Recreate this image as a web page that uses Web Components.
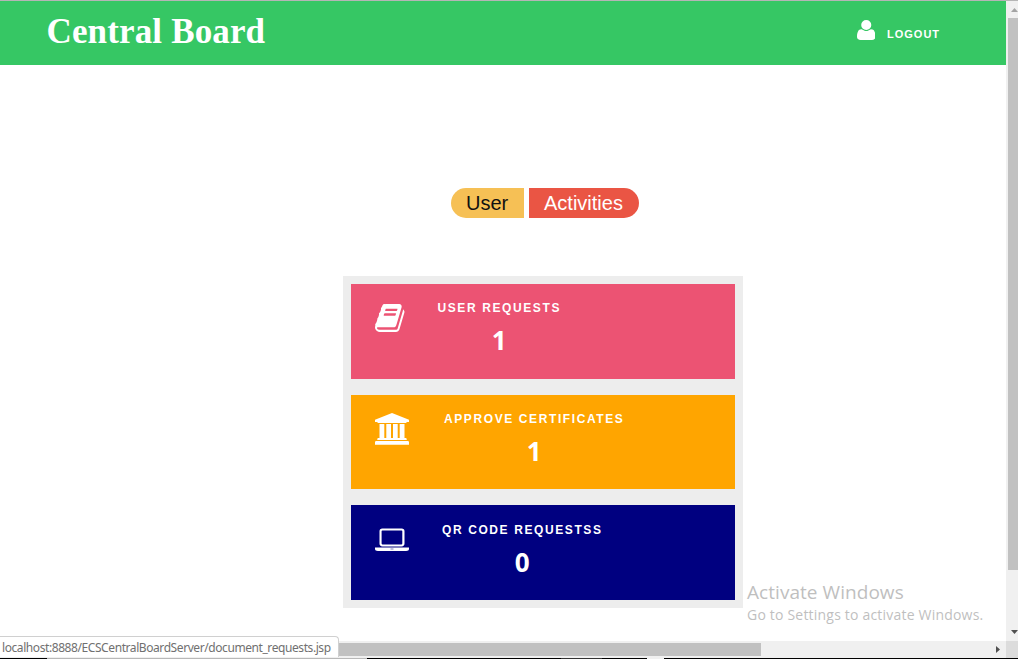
<!DOCTYPE html>
<html lang="en"><head><meta charset="utf-8"><title>Central Board</title>
<style>body{margin:0;overflow:hidden;background:#fff;font-family:"Liberation Sans",Arial,sans-serif}</style></head>
<body>
<browser-view>
  <board-header slot="page"></board-header>
  <pill-tabs slot="page"></pill-tabs>
  <card-stack slot="page">
    <stat-card icon="book" value="1" style="--bg:#ec5373;--indent:86.5px;--top:20px;--left:24px">USER REQUESTS</stat-card>
    <stat-card icon="bank" value="1" style="--bg:#ffa500;--indent:93px;--top:18px">APPROVE CERTIFICATES</stat-card>
    <stat-card icon="laptop" value="0" style="--bg:#000080;--indent:91px;--top:23px;--drop:18px">QR CODE REQUESTSS</stat-card>
  </card-stack>
  <activation-note slot="overlay"></activation-note>
  <status-bubble slot="overlay">localhost:8888/ECSCentralBoardServer/document_requests.jsp</status-bubble>
</browser-view>
<script>
const define=(name,html)=>customElements.define(name,class extends HTMLElement{
  constructor(){super();this.attachShadow({mode:'open'}).innerHTML=html;}
});
const icons={
 user:'<svg viewBox="192 128 1408 1536" preserveAspectRatio="none" width="18.5" height="20"><path fill="#fff" d="M1600 1405q0 120-73 189.5t-194 69.5h-874q-121 0-194-69.5t-73-189.5q0-53 3.5-103.5t14-109 26.5-108.5 43-97.5 62-81 85.5-53.5 111.5-20q9 0 42 21.5t74.5 48 108 48 133.5 21.5 133.5-21.5 108-48 74.5-48 42-21.5q61 0 111.5 20t85.5 53.5 62 81 43 97.5 26.5 108.5 14 109 3.5 103.5zm-320-893q0 159-112.5 271.5t-271.5 112.5-271.5-112.5-112.5-271.5 112.5-271.5 271.5-112.5 271.5 112.5 112.5 271.5z"/></svg>',
 book:'<svg viewBox="63 128 1668 1536" preserveAspectRatio="none" width="29.5" height="28"><path fill="#fff" d="M1703 478q40 57 18 129l-275 906q-19 64-76.5 107.5t-122.5 43.5h-923q-77 0-148.5-53.5t-99.5-131.5q-24-67-2-127 0-4 3-27t4-37q1-8-3-21.5t-3-19.5q2-11 8-21t16.5-23.5 16.5-23.5q23-38 45-91.5t30-91.5q3-10 .5-30t-.5-28q3-11 17-28t17-23q21-36 42-92t25-90q1-9-2.5-32t.5-28q4-13 22-30.5t22-22.5q19-26 42.5-84.5t27.5-96.5q1-8-3-25.5t-2-26.5q2-8 9-18t18-23 17-21q8-12 16.5-30.5t15-35 16-36 19.5-32 26.5-23.5 36-11.5 47.5 5.5l-1 3q38-9 51-9h761q74 0 114 56t18 130l-274 906q-36 119-71.5 153.5t-128.5 34.5h-869q-27 0-38 15-11 16-1 43 24 70 144 70h923q29 0 56-15.5t35-41.5l300-987q7-22 5-57 38 15 59 43zm-1064 2q-4 13 2 22.5t20 9.5h608q13 0 25.5-9.5t16.5-22.5l21-64q4-13-2-22.5t-20-9.5h-608q-13 0-25.5 9.5t-16.5 22.5zm-83 256q-4 13 2 22.5t20 9.5h608q13 0 25.5-9.5t16.5-22.5l21-64q4-13-2-22.5t-20-9.5h-608q-13 0-25.5 9.5t-16.5 22.5z"/></svg>',
 bank:'<svg viewBox="0 0 34 32" width="34" height="32"><path fill="#fff" d="M17 0 34 6.7V9H31.7Q31.7 10 30.6 10H3.4Q2.3 10 2.3 9H0V6.7ZM4.5 11H9.3V25H11.3V11H16V25H18V11H22.7V25H24.7V11H29.5V25H30.6Q31.7 25 31.7 26V27H2.3V26Q2.3 25 3.4 25H4.5ZM1.2 28H32.8Q34 28 34 29.2V31.8H0V29.2Q0 28 1.2 28Z"/></svg>',
 laptop:'<svg viewBox="0 0 34 24" width="34" height="24"><path fill="#fff" fill-rule="evenodd" d="M7.4 0.4H26.6Q29.5 .4 29.5 3.2V15.6Q29.5 18.4 26.6 18.4H7.4Q4.5 18.4 4.5 15.6V3.2Q4.5 .4 7.4 .4ZM7.4 2.5Q6.6 2.5 6.6 3.2V15.6Q6.6 16.4 7.4 16.4H26.6Q27.3 16.4 27.3 15.6V3.2Q27.3 2.5 26.6 2.5ZM0 19.4H34V21.2Q34 23 31.2 23H2.8Q0 23 0 21.2ZM15.5 20.8V21.3H18.5V20.8Z"/></svg>'
};
define('browser-view',`<style>
:host{display:grid;position:relative;width:1018px;height:659px;grid-template:1px 640px 17px 1px/1006px 12px;overflow:hidden}
.edge{grid-column:1/3;background:#b5b5b5}.page{overflow:hidden;background:#fff}
.v{background:#f0f0f0;display:flex;flex-direction:column;align-items:flex-end}
.v svg,.h svg{display:block}.v i{width:10px;height:552px;background:#c1c1c1}
.h{background:#f0f0f0;display:flex;align-items:center}.h i{width:761px;height:13px;background:#c1c1c1}.h svg{margin-left:233px}
.c{background:#dcdcdc}.task{grid-column:1/3;background:linear-gradient(90deg,#000 47px,#b8b8b8 47px 367px,#000 367px 561px,#333 561px 602px,#000 602px 647px,#f0f0f0 647px 664px,#000 664px)}
</style><div class="edge"></div><div class="page"><slot name="page"></slot></div>
<div class="v"><svg width="10" height="17"><path fill="#a3a3a3" d="M3 11 6.5 7 10 11Z"/></svg><i></i><svg width="10" height="71"><path fill="#505050" d="M3 60H10L6.5 64Z"/></svg></div>
<div class="h"><i></i><svg width="8" height="9"><path fill="#505050" d="M2 1V8L6 4.5Z"/></svg></div><div class="c"></div><div class="task"></div><slot name="overlay"></slot>`);
define('board-header',`<style>
:host{display:flex;height:64px;background:#36c764;color:#fff;box-sizing:border-box;padding:0 66.5px 0 46.5px;justify-content:space-between}
h1{margin:10px 0 0;font:bold 35px/42px "Liberation Serif",serif;letter-spacing:.15px;white-space:nowrap}
a{display:flex;margin-top:19px;width:83px;height:26px;color:#fff}
span{font:bold 11px/26px "Liberation Sans",sans-serif;letter-spacing:1px;margin:1px 0 0 12px}svg{flex:none}
</style><h1>Central Board</h1><a>${icons.user}<span>LOGOUT</span></a>`);
define('pill-tabs',`<style>
:host{display:flex;gap:5px;margin:123px 0 0 451px;font:20px/30px "Liberation Sans",sans-serif}
span{box-sizing:border-box;height:30px;padding-left:15px;white-space:nowrap}
.u{width:73px;border-radius:15px 0 0 15px;background:#f6c055;color:#111}.a{width:110px;border-radius:0 15px 15px 0;background:#ea5544;color:#fff}
</style><span class="u">User</span><span class="a">Activities</span>`);
define('card-stack',`<style>:host{display:flex;flex-direction:column;gap:16px;box-sizing:border-box;width:400px;height:332px;padding:8px;margin:58px 0 0 343px;background:#ededed}</style><slot></slot>`);
customElements.define('stat-card',class extends HTMLElement{
  constructor(){super();this.attachShadow({mode:'open'}).innerHTML=`<style>
:host{display:grid;grid-template-columns:var(--indent) max-content;flex:1 1 0;background:var(--bg);color:#fff;overflow:hidden}
.icon{padding:var(--top) 0 0 var(--left,23.5px)}.icon svg{display:block}
.info{padding-top:var(--drop,17px);text-align:center}
.label{font:bold 12px/14px "Liberation Sans",sans-serif;letter-spacing:1.6px;white-space:nowrap}
.num{font:bold 26px/30px "Open Sans",sans-serif;margin-top:10px}
</style><div class="icon">${icons[this.getAttribute('icon')]}</div><div class="info"><div class="label"><slot></slot></div><div class="num">${this.getAttribute('value')}</div></div>`;}
});
define('activation-note',`<style>:host{position:absolute;left:747px;top:580px;color:#bfbfbf;font-family:"Open Sans",sans-serif;white-space:nowrap}
.t{font-size:19px;line-height:25px;letter-spacing:.05px}.s{font-size:14px;line-height:20px;letter-spacing:.2px}</style><div class="t">Activate Windows</div><div class="s">Go to Settings to activate Windows.</div>`);
define('status-bubble',`<style>:host{position:absolute;left:0;top:636px;width:339px;height:21px;box-sizing:border-box;border:solid #d0d0d0;border-width:1px 1px 0 0;border-radius:0 4px 0 0;background:#fff;color:#707070;font:12px/22px "Noto Sans",sans-serif;letter-spacing:-.42px;padding-left:2px;white-space:nowrap}</style><slot></slot>`);
</script></body></html>
